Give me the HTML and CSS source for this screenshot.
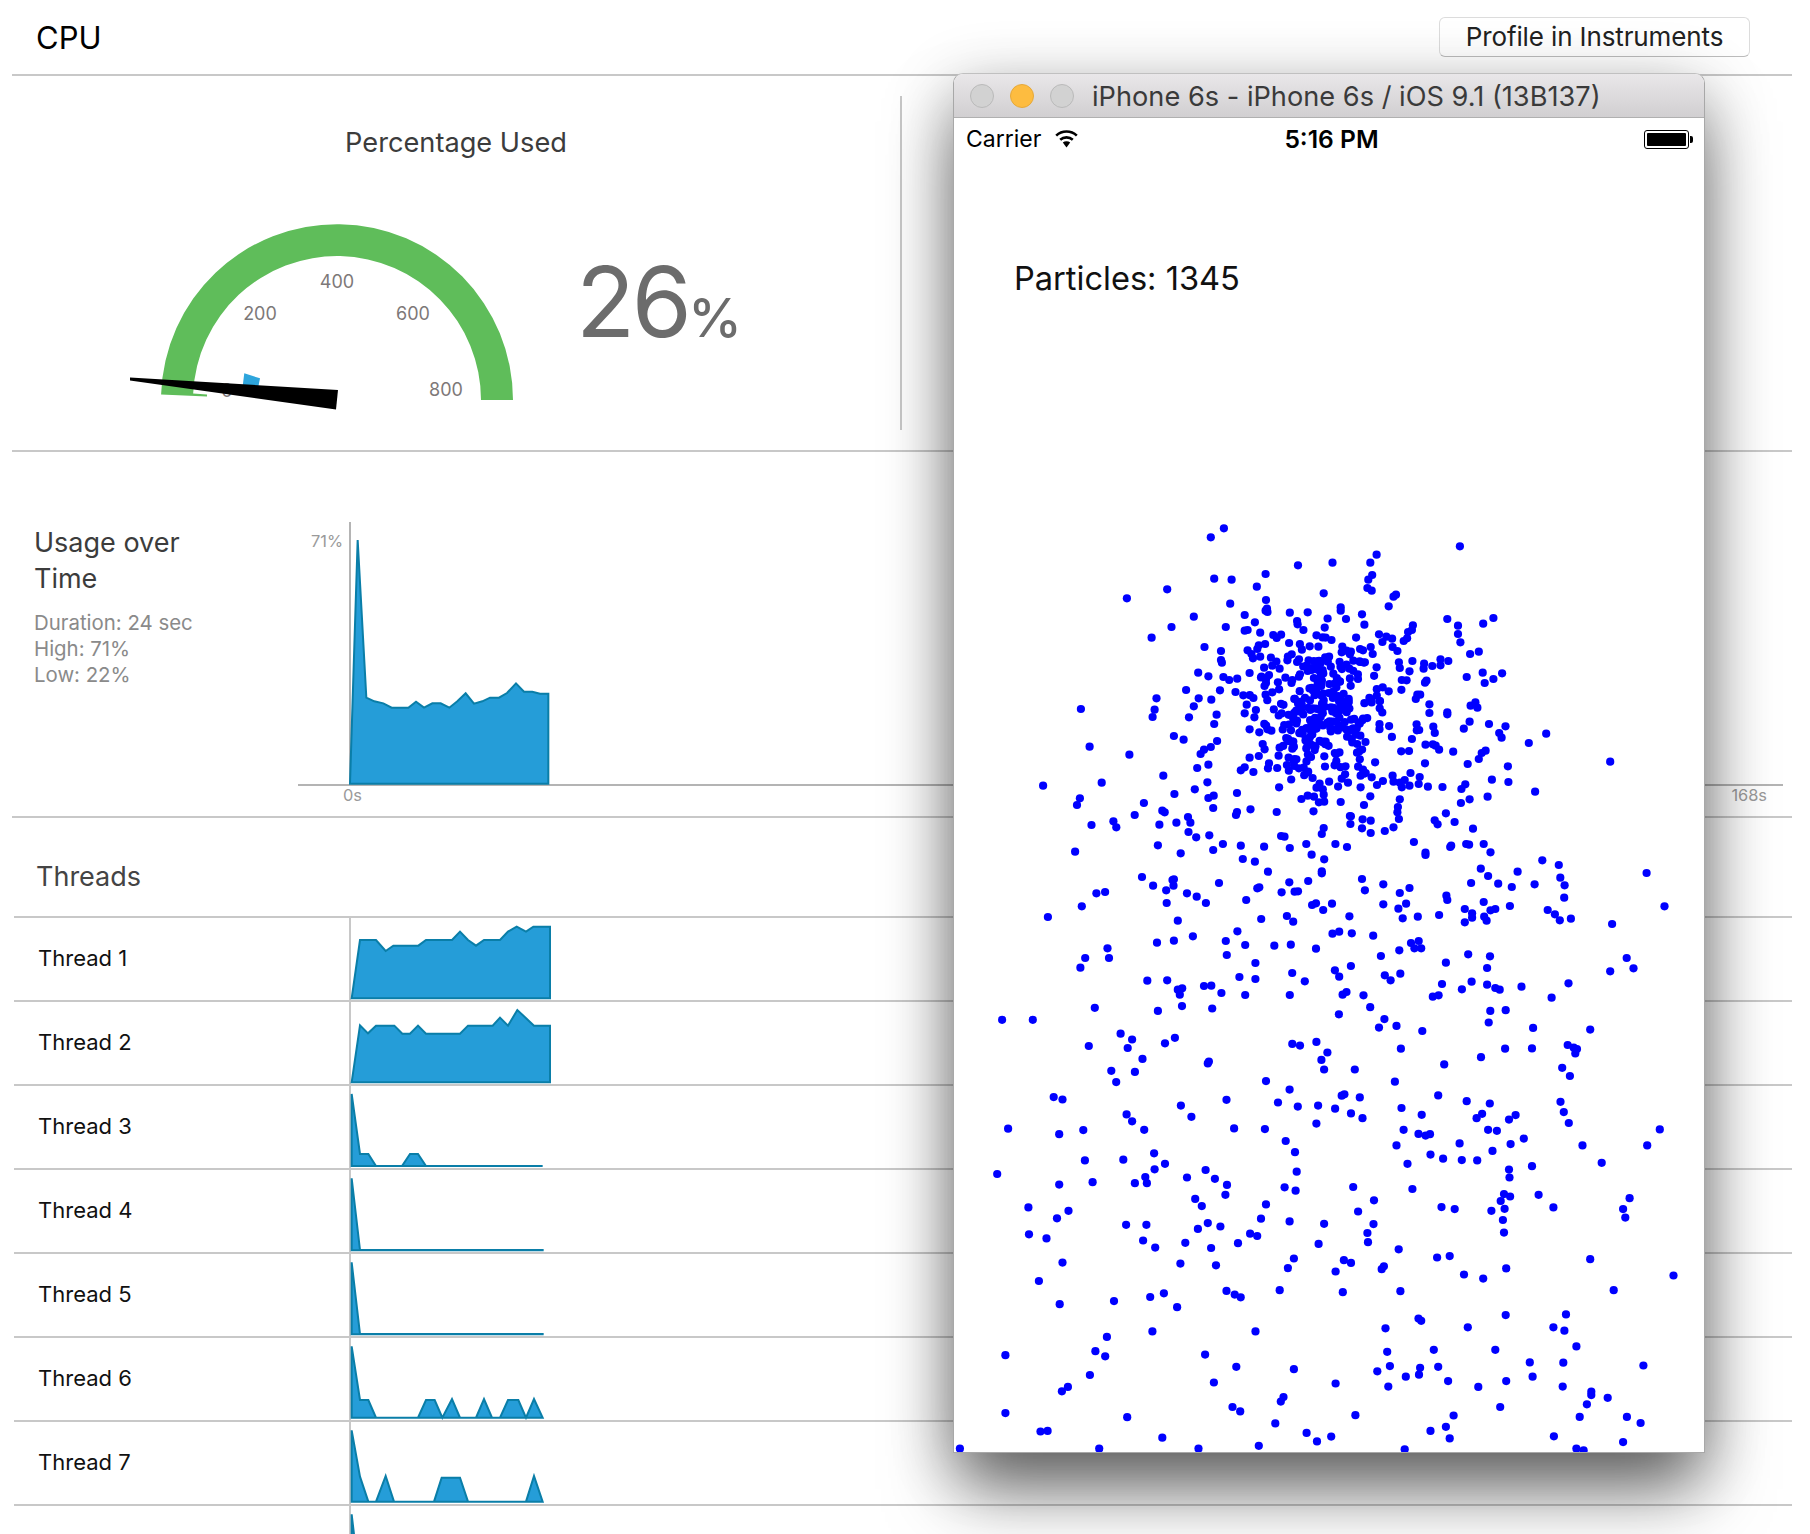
FILE: index.html
```html
<!DOCTYPE html>
<html lang="en">
<head>
<meta charset="utf-8">
<title>CPU</title>
<link rel="stylesheet" href="styles.css">
</head>
<body>
<div class="page">
  <header class="header">
    <h1 class="page-title">CPU</h1>
    <button class="profile-btn">Profile in Instruments</button>
  </header>

  <section class="summary">
    <div class="gauge-panel">
      <h2 class="gauge-title">Percentage Used</h2>
      <div class="gauge-row">
        <svg class="gauge" viewBox="125 215 400 200" width="400" height="200">
          <path class="gauge-arc" d="M161.09 394.5A176 176 0 0 1 513 400H481A144 144 0 0 0 193.15 393.5L207 394.5V396.5Z"/>
          <polygon class="gauge-mark" points="244.3,373.3 260,378.3 258.3,387 242.7,386"/>
          <text class="gauge-label" x="337" y="288">400</text>
          <text class="gauge-label" x="260" y="320">200</text>
          <text class="gauge-label" x="413" y="320">600</text>
          <text class="gauge-label" x="446" y="396">800</text>
          <text class="gauge-label" x="227" y="396.5">0</text>
          <polygon class="gauge-needle" points="130,377.5 338,390 336,409.5 130,380.5"/>
        </svg>
        <div class="gauge-value"><span class="gauge-num">26</span><span class="gauge-pct">%</span></div>
      </div>
    </div>
  </section>

  <section class="usage">
    <div class="usage-info">
      <h2 class="usage-title">Usage over Time</h2>
      <p class="usage-stat">Duration: 24 sec</p>
      <p class="usage-stat">High: 71%</p>
      <p class="usage-stat">Low: 22%</p>
    </div>
    <div class="usage-chart">
      <div class="plot">
        <div class="y-label">71%</div>
        <svg class="plot-svg" viewBox="183 36 660 786" width="220" height="262">
          <polygon class="area" points="180,821 203,90 229,563 253,574 280,580 305,593 355,593 378,575 402,593 427,580 452,580 478,593 502,574 527,550 552,581 577,574 600,563 627,563 651,549 678,520 702,545 727,545 750,551 775,551 775,821"/>
        </svg>
      </div>
      <div class="x-labels"><span>0s</span><span>168s</span></div>
    </div>
  </section>

  <section class="threads">
    <h2 class="threads-title">Threads</h2>
    <div class="thread-row"><div class="thread-name">Thread 1</div><div class="thread-chart"><svg viewBox="33 3 657 246" width="219" height="82"><polygon class="area" points="35,244 60,69 108,69 137,102 160,86 235,86 258,69 336,69 360,44 384,69 408,86 432,69 480,69 504,44 530,29 558,44 580,29 630,29 630,244"/></svg></div></div>
    <div class="thread-row"><div class="thread-name">Thread 2</div><div class="thread-chart"><svg viewBox="33 3 657 246" width="219" height="82"><polygon class="area" points="35,244 60,73 84,97 108,74 163,74 187,98 210,98 234,74 258,98 360,98 384,74 458,74 480,50 504,74 532,27 582,74 630,74 630,244"/></svg></div></div>
    <div class="thread-row"><div class="thread-name">Thread 3</div><div class="thread-chart"><svg viewBox="33 3 657 246" width="219" height="82"><polygon class="area" points="35,243 35,27 60,207 85,207 108,243 186,243 210,207 234,207 258,243 608,243"/></svg></div></div>
    <div class="thread-row"><div class="thread-name">Thread 4</div><div class="thread-chart"><svg viewBox="33 3 657 246" width="219" height="82"><polygon class="area" points="35,244 35,28 60,243 608,243 608,244"/></svg></div></div>
    <div class="thread-row"><div class="thread-name">Thread 5</div><div class="thread-chart"><svg viewBox="33 3 657 246" width="219" height="82"><polygon class="area" points="35,244 35,28 60,243 608,243 608,244"/></svg></div></div>
    <div class="thread-row"><div class="thread-name">Thread 6</div><div class="thread-chart"><svg viewBox="33 3 657 246" width="219" height="82"><polygon class="area" points="35,242 35,28 60,189 85,189 108,242 234,242 258,189 284,189 307,242 336,186 360,242 408,242 432,186 456,242 480,242 504,189 535,189 558,242 582,186 608,242"/></svg></div></div>
    <div class="thread-row"><div class="thread-name">Thread 7</div><div class="thread-chart"><svg viewBox="33 3 657 246" width="219" height="82"><polygon class="area" points="35,242 35,28 60,167 85,242 108,242 137,165 162,242 282,242 305,170 360,170 384,242 558,242 582,165 608,242"/></svg></div></div>
    <div class="thread-row"><div class="thread-name"></div><div class="thread-chart"><svg viewBox="33 3 657 246" width="219" height="82"><polygon class="area" points="35,244 35,28 60,243 608,243 608,244"/></svg></div></div>
  </section>

  <aside class="sim-window">
    <div class="sim-titlebar">
      <span class="light"></span><span class="light light-min"></span><span class="light"></span>
      <span class="sim-title">iPhone 6s - iPhone 6s / iOS 9.1 (13B137)</span>
    </div>
    <div class="sim-screen">
      <svg id="particles" class="particles" viewBox="954 118 750 1334" width="750" height="1334"></svg>
      <div class="status-bar">
        <div class="status-left">
          <span>Carrier</span>
          <svg class="wifi" viewBox="0 0 23 18" width="23" height="18">
            <path class="wifi-arc" d="M1.2 5.6A15 15 0 0 1 21.8 5.6"/>
            <path class="wifi-arc" d="M5.2 9.8A9.4 9.4 0 0 1 17.8 9.8"/>
            <path class="wifi-dot" d="M7.8 12.6A5.4 5.4 0 0 1 15.2 12.6L11.5 17.6Z"/>
          </svg>
        </div>
        <div class="status-time">5:16 PM</div>
        <div class="status-right">
          <div class="battery"><div class="battery-fill"></div></div>
          <div class="battery-nub"></div>
        </div>
      </div>
      <div class="particle-count">Particles: 1345</div>
    </div>
  </aside>
</div>
<script src="particles.js"></script>
</body>
</html>
```

FILE: styles.css
```css
* { box-sizing: border-box; }
html, body { margin: 0; padding: 0; height: 100%; overflow: hidden; background: #fff; }
body { font-family: Inter, "Liberation Sans", sans-serif; color: #111; }
h1, h2, p { margin: 0; font-weight: 400; }

.page { position: relative; width: 1810px; height: 1534px; overflow: hidden; }

.header {
  display: flex; align-items: center; justify-content: space-between;
  width: 1780px; height: 76px; margin-left: 12px; padding: 2px 42px 0 24px;
  border-bottom: 2px solid #c8c8c8;
}
.page-title { font-size: 31px; line-height: 38px; color: #000; }
.profile-btn {
  width: 311px; height: 40px; padding: 0;
  margin-top: -2px;
  font: 400 26px/36px Inter, "Liberation Sans", sans-serif; letter-spacing: -.12px; color: #222;
  background: #fff; border: 1px solid #dcdcdc; border-bottom-color: #bdbdbd; border-radius: 6px;
}

.summary { width: 1780px; height: 376px; margin-left: 12px; padding-top: 20px; border-bottom: 2px solid #c8c8c8; }
.gauge-panel { width: 890px; height: 334px; padding-top: 30px; border-right: 2px solid #c8c8c8; }
.gauge-title { font-size: 27.2px; line-height: 34px; color: #3c3c3c; text-align: center; }
.gauge-row { display: flex; align-items: flex-start; margin-top: 55px; padding-left: 113px; }
.gauge { display: block; flex: none; }
.gauge-arc { fill: #5fbd5a; }
.gauge-mark { fill: #2ea5dc; }
.gauge-needle { fill: #000; }
.gauge-label { font-size: 18px; fill: #7d7878; text-anchor: middle; }
.gauge-value { display: flex; align-items: baseline; margin: 39px 0 0 51px; color: #6c6c6c; font-weight: 380; }
.gauge-num { font-size: 97px; line-height: 96px; letter-spacing: -3.5px; }
.gauge-pct { font-size: 54px; line-height: 58px; font-weight: 450; }

.usage { display: flex; align-items: flex-start; width: 1780px; height: 366px; margin-left: 12px; padding: 70px 0 0 23px; border-bottom: 2px solid #c8c8c8; }
.usage-info { flex: none; width: 263px; padding-top: 3px; }
.usage-title { width: 190px; font-size: 27px; line-height: 36px; color: #3c3c3c; margin-bottom: 13px; margin-left: -1px; }
.usage-stat { margin-left: -1px; font-size: 20.4px; line-height: 26px; color: #8a8a8a; }
.usage-chart { flex: 1; display: flex; flex-direction: column; margin-right: 9px; }
.plot { display: flex; height: 264px; border-bottom: 2px solid #b4b4b4; }
.y-label { flex: none; width: 51px; padding: 9px 6px 0 0; text-align: right; font-size: 16.4px; line-height: 20px; color: #9a9a9a; }
.plot-svg { display: block; flex: none; overflow: visible; border-left: 2px solid #b4b4b4; width: 222px; }
.area { fill: #259dd8; stroke: #0a7ea8; stroke-width: 6; stroke-linejoin: miter; }
.x-labels { display: flex; justify-content: space-between; padding: 0 16px 0 45px; margin-top: -1px; font-size: 16.4px; line-height: 20px; color: #9a9a9a; }

.threads { width: 1778px; margin-left: 14px; }
.threads-title { height: 100px; padding: 42px 0 0 22px; font-size: 27px; line-height: 34px; color: #444; border-bottom: 2px solid #c8c8c8; }
.thread-row { display: flex; height: 84px; border-bottom: 2px solid #c8c8c8; }
.thread-name { flex: none; width: 335px; padding-left: 24px; font-size: 22px; line-height: 80px; color: #111; }
.thread-chart { flex: 1; border-left: 2px solid #c8c8c8; margin-bottom: -2px; }
.thread-chart svg { display: block; overflow: visible; }

.sim-window {
  position: absolute; left: 953px; top: 73px; width: 752px; height: 1380px;
  border: 1px solid #a8a8a8; border-top-color: #c0c0c0; border-radius: 10px 10px 0 0;
  background: #fff; overflow: hidden;
  box-shadow: 0 42px 70px -6px rgba(0,0,0,.55), 0 12px 64px rgba(0,0,0,.24);
}
.sim-titlebar {
  display: flex; align-items: center; height: 44px; padding: 0 0 0 16px; gap: 16px;
  background: linear-gradient(#e9e7e9, #d1cfd1); border-bottom: 1px solid #b0b0b0;
}
.light { flex: none; width: 24px; height: 24px; border-radius: 50%; background: #d2d2d2; border: 1px solid #bababa; }
.light-min { background: #fdbc40; border-color: #e5a83a; }
.sim-title { margin-left: 2px; padding-top: 2px; font-size: 27.2px; line-height: 32px; color: #3a3a3a; white-space: nowrap; }
.sim-screen { position: relative; height: 1335px; overflow: hidden; background: #fff; }
.particles { position: absolute; left: 0; top: 0; }
.particles circle { fill: #0000ff; }
.status-bar { position: relative; display: grid; grid-template-columns: 1fr auto 1fr; align-items: center; height: 42px; padding: 0 11px 0 12px; font-size: 23px; color: #000; }
.status-left { display: flex; align-items: center; gap: 13px; }
.wifi { display: block; transform: translateX(1px); }
.wifi-arc { fill: none; stroke: #000; stroke-width: 2.6; }
.wifi-dot { fill: #000; }
.status-time { font-size: 24.6px; font-weight: 600; transform: translateX(2px); }
.status-right { display: flex; align-items: center; justify-content: flex-end; }
.battery { width: 45px; height: 19px; padding: 2px; border: 1px solid #000; border-radius: 3px; }
.battery-fill { width: 100%; height: 100%; background: #000; border-radius: 1px; }
.battery-nub { width: 3px; height: 7px; margin-left: 1px; background: #000; border-radius: 0 2px 2px 0; }
.particle-count { position: relative; margin: 99px 0 0 60px; font-size: 32.6px; line-height: 38px; color: #111; }
```

FILE: particles.js
```js
// Particle positions read off the simulator screen, in two sampled bands.
var upper = [565,85,538,112,1052,139,880,164,867,188,789,188,718,196,651,222,871,225,863,239,545,236,581,239,633,260,861,264,870,272,771,280,448,268,365,295,920,284,915,290,652,300,578,311,905,319,806,322,806,332,654,326,655,336,651,332,701,338,738,337,850,343,503,350,608,345,817,357,1026,357,1121,354,716,363,717,373,629,367,855,374,1100,371,955,376,1048,377,457,381,569,381,953,390,945,396,729,390,614,390,608,392,640,398,1048,402,416,413,667,405,683,404,674,414,756,406,885,403,900,410,912,416,892,426,943,415,936,423,787,420,1053,427,650,432,637,436,634,447,525,441,742,439,760,440,868,441,913,441,923,453,559,453,614,451,726,449,818,452,846,447,852,451,808,457,827,455,825,463,872,462,1091,455,1073,462,622,462,625,475,640,470,662,473,705,463,697,470,696,481,559,480,561,488,782,470,774,472,760,483,720,478,716,486,832,482,846,486,856,487,926,487,954,483,1012,478,1028,483,978,491,995,498,1012,496,648,503,665,497,680,506,746,504,738,513,824,506,880,502,928,504,977,506,948,514,512,518,618,519,658,525,533,529,564,531,576,540,652,538,652,549,692,533,722,523,720,530,1066,531,1099,518,1139,520,1121,537,1103,549,983,542,980,548,942,541,932,540,487,570,557,571,589,576,605,586,426,595,513,595,539,599,626,594,651,584,665,577,679,568,964,584,970,584,961,597,989,613,1084,607,1074,617,1088,623,503,619,612,614,270,627,422,629,418,651,493,652,550,644,608,640,628,652,631,630,1026,637,1026,643,989,639,545,672,1072,665,1112,672,1146,679,997,680,1060,686,618,688,638,697,655,688,663,692,968,690,963,691,1133,699,1138,713,1230,701,462,708,482,719,551,723,953,717,1194,729,645,732,538,741,524,749,517,762,288,740,370,764,649,748,680,743,637,768,678,767,618,773,981,734,996,733,1002,737,1009,749,1038,755,947,753,1105,752,1097,759,1091,777,1362,785,658,790,533,794,510,804,608,802,600,811,656,805,675,804,695,795,699,812,980,790,1068,792,1151,799,877,787,816,799,842,800,852,809,739,815,748,834,815,823,847,827,870,832,913,827,950,819,969,831,440,827,531,847,313,848,192,857,782,845,808,836,821,848,893,843,915,845,928,848,938,840,932,862,948,857,967,852,986,860,1016,861,1063,853,1055,867,1118,839,1152,846,679,862,505,868,463,882,592,879,756,863,769,868,847,862,881,855,1207,875,268,895,533,894,544,887,725,897,738,887,751,890,771,884,772,905,761,907,867,889,928,898,1072,898,1109,890,262,915,400,909,543,924,806,906,854,915,924,921,923,937,1054,909,438,932,443,937,620,928,592,936,590,945,674,936,750,934,381,945,491,951,825,948,1023,940,827,949,337,964,343,982,292,975,432,974,467,968,496,968,868,962,926,957,1000,961,1006,973,1041,966,826,972,771,984,850,985,915,982,897,993,868,999,1079,986,767,1002,492,996,535,1006,508,1012,683,1008,690,1010,957,1026,429,1036,563,1032,600,1037,735,1032,795,1032,1032,1041,1034,1037,1065,1032,1071,1034,1101,1032,648,1040,701,1044,819,1041,543,1050,258,1055,476,1060,746,1064,981,1058,981,1065,1115,1057,604,1077,629,1085,772,1078,1222,1081,1256,1095,1095,1106,656,1115,767,1114,767,1120,1171,1115,1437,1119,396,1131,459,1140,462,1138,1110,1128,1259,1133,555,1149,700,1147,739,1143,850,1137,461,1157,419,1157,446,1171,894,1153,1075,1149,1131,1151,1268,1156,1206,1153,1159,1161,638,1162,634,1165,948,1164,856,1171,302,1180,320,1176,489,1180,684,1177,711,1175,718,1174,928,1179,509,1190,1024,1187,1026,1200,1267,1193,447,1209,528,1209,611,1200,755,1210,747,1215,788,1211,894,1213,941,1211,1101,1206,272,1219,1155,1218,1474,1219,770,1230,925,1226,1125,1227,1115,1231,1062,1227,1233,1230,1248,1243,824,1249,695,1248,1009,1245,965,1250,934,1255,202,1251,642,1257,470,1262,708,1265,1077,1240,1077,1253,1102,1250,1107,1262,1062,1267,1258,1261,1281,1256,1366,1272,593,1294,803,1295,789,1301,829,1300,873,1307,501,1309,462,1322,427,1328,569,1323,609,1335,669,1337,703,1334,951,1329,967,1323,958,1345,972,1345,927,1351,755,1346,325,1345,279,1374,328,1374,889,1368,1069,1363,1114,1369,1396,1374,571,1365,630,1389,1023,1388,827,1398,269,1403,1108,1404,1410,1405,794,1411,706,1419,897,1426,929,1421,1362,1414,803,1430,597,1431,630,1437,909,1441,407,1442,448,1441,732,1444,1076,1445,1015,1452,1276,1450,524,1458,539,1457,1108,1454,1125,1464,1134,1469,1179,1460,479,1465,470,1469,560,1479,474,1484,609,1485,701,1485,1056,1468,818,1476,810,1484,853,1486,996,1490,1008,1486,1241,1493];
var lower = [264,23,379,32,423,18,478,25,95,58,151,58,709,42,766,21,985,32,1013,30,792,56,782,81,814,76,861,91,982,66,1063,82,1167,87,311,99,332,116,410,111,392,127,253,135,324,141,624,129,638,134,668,123,688,154,822,143,1012,143,1061,142,1126,132,1137,140,1143,144,1140,157,351,173,677,176,968,168,472,181,470,186,901,189,294,208,337,211,682,204,738,204,1116,199,1130,223,303,241,576,238,811,240,619,263,714,281,719,277,747,286,890,280,189,285,205,292,504,293,598,301,942,297,984,304,1113,299,421,310,634,313,671,310,702,319,823,317,1119,329,322,336,731,333,860,337,970,334,1031,338,960,347,1019,351,440,343,752,347,332,356,1128,361,668,363,106,378,199,394,243,382,354,381,518,377,574,379,827,381,981,381,997,384,1294,380,854,393,867,398,875,394,612,414,1046,407,814,427,929,421,1022,423,1153,427,1271,427,629,447,989,443,372,450,876,454,899,466,933,470,961,471,246,471,316,469,392,481,834,481,1188,478,373,497,466,499,1019,498,1061,488,632,504,86,511,356,520,432,521,483,525,1020,521,260,535,337,538,359,538,199,542,505,543,610,550,735,549,843,555,630,560,502,572,1010,570,1021,577,1073,572,447,584,459,605,576,600,773,588,1004,590,1239,582,143,609,896,608,920,614,1011,613,1100,609,1227,614,216,619,744,621,987,619,195,641,567,642,619,650,1008,646,1231,639,321,660,358,660,470,655,493,665,452,672,682,657,772,658,144,688,176,700,547,686,560,693,761,684,1010,683,352,706,429,713,525,714,672,716,762,711,374,727,476,728,818,732,627,759,718,764,731,772,888,756,911,752,1167,761,205,771,420,774,485,779,616,787,791,782,787,790,1014,788,703,797,937,806,972,818,1319,809,162,825,504,854,519,865,530,873,601,852,716,858,821,855,1210,852,390,861,365,872,299,884,200,893,414,902,1013,925,1123,923,854,935,859,942,794,964,944,961,1100,961,1120,971,369,973,557,973,286,989,1142,1017,265,1031,101,1043,283,1046,465,1041,797,1033,882,1027,994,1027,1057,1064,1118,1065,1264,1073,522,1077,627,1084,779,1090,802,1075,857,1080,890,1077,255,1101,855,1100,831,1106,1062,1106,908,1119,1014,1119,481,1123,703,1126,799,1135,963,1136,1117,1135,215,1136,204,1149,1169,1150,1169,1160,608,1166,603,1179,1199,1168,1161,1187,515,1195,529,1208,1003,1195,101,1213,323,1225,739,1219,918,1220,1148,1224,1234,1224,1259,1242,593,1243,165,1267,178,1265,650,1271,876,1265,904,1253,387,1285,669,1296,695,1282,911,1287,1101,1281,1227,1298,18,1317,272,1317,453,1317,563,1309,829,1319,1142,1317,1155,1322];

var svg = document.getElementById('particles');
function dot(x, y) {
  var c = document.createElementNS('http://www.w3.org/2000/svg', 'circle');
  c.setAttribute('cx', x.toFixed(1));
  c.setAttribute('cy', y.toFixed(1));
  c.setAttribute('r', '4.1');
  svg.appendChild(c);
}
for (var i = 0; i < upper.length; i += 2) dot(950 + upper[i] / 2.063, 500 + upper[i + 1] / 3);
for (var j = 0; j < lower.length; j += 2) dot(950 + lower[j] / 1.823, 1000 + lower[j + 1] / 2.936);

// The dense core of the burst.
var seed = 1345;
function rnd() { seed = (seed * 16807) % 2147483647; return seed / 2147483647; }
function gauss() { return Math.sqrt(-2 * Math.log(rnd())) * Math.cos(6.2832 * rnd()); }
for (var k = 0; k < 230; k++) dot(1325 + gauss() * 29, 716 + gauss() * 30);
for (var m = 0; m < 30; m++) dot(1330 + gauss() * 44, 705 + gauss() * 42);
```
